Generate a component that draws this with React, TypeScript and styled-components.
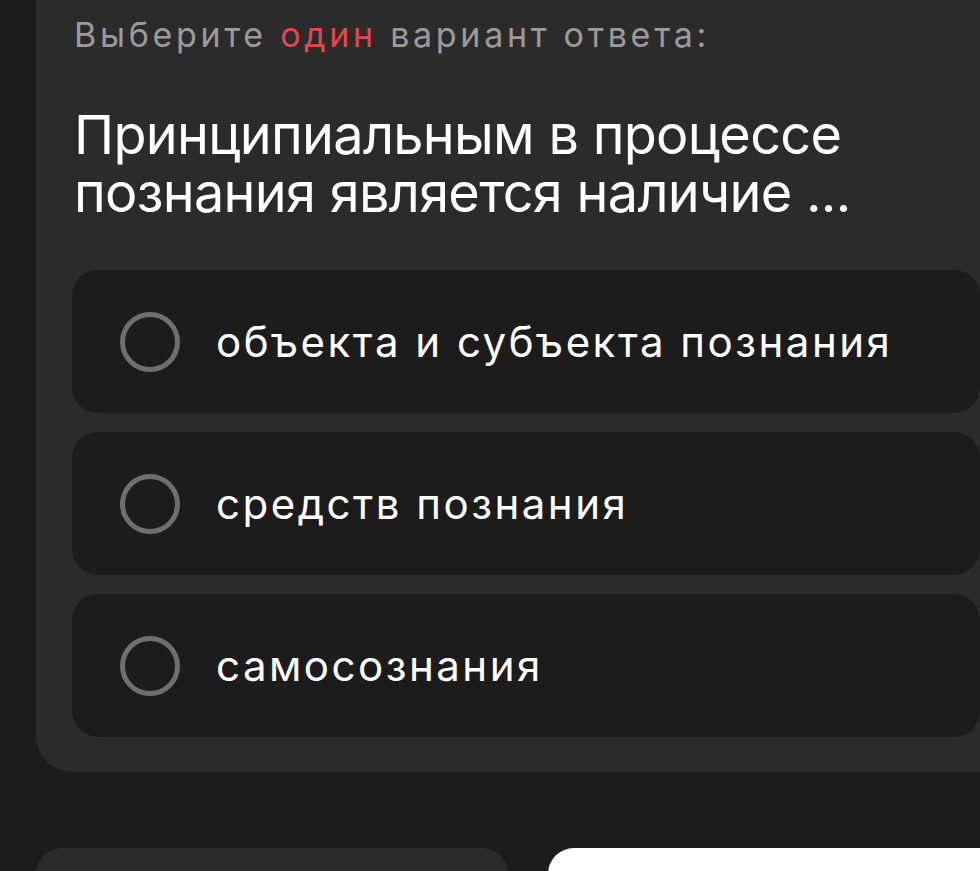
import styled, { createGlobalStyle } from "styled-components";

const GlobalStyle = createGlobalStyle`
  html, body {
    margin: 0;
    padding: 0;
    background: #1c1c1c;
    overflow: hidden;
  }
  body {
    font-family: Inter, "Noto Sans", sans-serif;
  }
`;

const Page = styled.div`
  width: 980px;
  height: 871px;
  overflow: hidden;
  background: #1c1c1c;
`;

const Card = styled.section`
  margin-left: 36px;
  width: 1000px;
  box-sizing: border-box;
  background: #2b2b2b;
  border-radius: 0 0 0 36px;
  padding: 12px 56px 35px 36px;
`;

const Hint = styled.div`
  color: #9b9b9b;
  font-size: 34px;
  line-height: 46px;
  font-weight: 400;
  letter-spacing: 3.7px;
  margin-left: 2px;
`;

const Accent = styled.span`
  color: #e2474f;
`;

const Question = styled.h2`
  margin: 48px 0 0 2px;
  color: #ffffff;
  font-size: 54px;
  line-height: 58px;
  font-weight: 400;
  letter-spacing: -0.7px;
`;

const Options = styled.div`
  margin-top: 48px;
  display: flex;
  flex-direction: column;
  gap: 19px;
`;

const Option = styled.label`
  display: flex;
  align-items: center;
  gap: 36px;
  height: 143px;
  padding-left: 48px;
  background: #1c1c1c;
  border-radius: 26px;
  cursor: pointer;
`;

const Radio = styled.span`
  width: 60px;
  height: 60px;
  box-sizing: border-box;
  border: 5px solid #6f6f6f;
  border-radius: 50%;
  flex-shrink: 0;
`;

const OptionText = styled.span`
  color: #ffffff;
  font-size: 42px;
  font-weight: 400;
  letter-spacing: 2.5px;
`;

const Footer = styled.div`
  display: flex;
  gap: 40px;
  margin: 76px 0 0 36px;
`;

const FooterButton = styled.button<{ $primary?: boolean }>`
  width: ${(p) => (p.$primary ? "480px" : "472px")};
  height: 90px;
  border: none;
  border-radius: 26px;
  background: ${(p) => (p.$primary ? "#ffffff" : "#2b2b2b")};
  flex-shrink: 0;
`;

const options = [
  "объекта и субъекта познания",
  "средств познания",
  "самосознания",
];

export default function App() {
  return (
    <Page>
      <GlobalStyle />
      <Card>
        <Hint>
          Выберите <Accent>один</Accent> вариант ответа:
        </Hint>
        <Question>
          Принципиальным в процессе
          <br />
          познания является наличие ...
        </Question>
        <Options>
          {options.map((text) => (
            <Option key={text}>
              <Radio />
              <OptionText>{text}</OptionText>
            </Option>
          ))}
        </Options>
      </Card>
      <Footer>
        <FooterButton aria-label="Назад" />
        <FooterButton $primary aria-label="Далее" />
      </Footer>
    </Page>
  );
}
